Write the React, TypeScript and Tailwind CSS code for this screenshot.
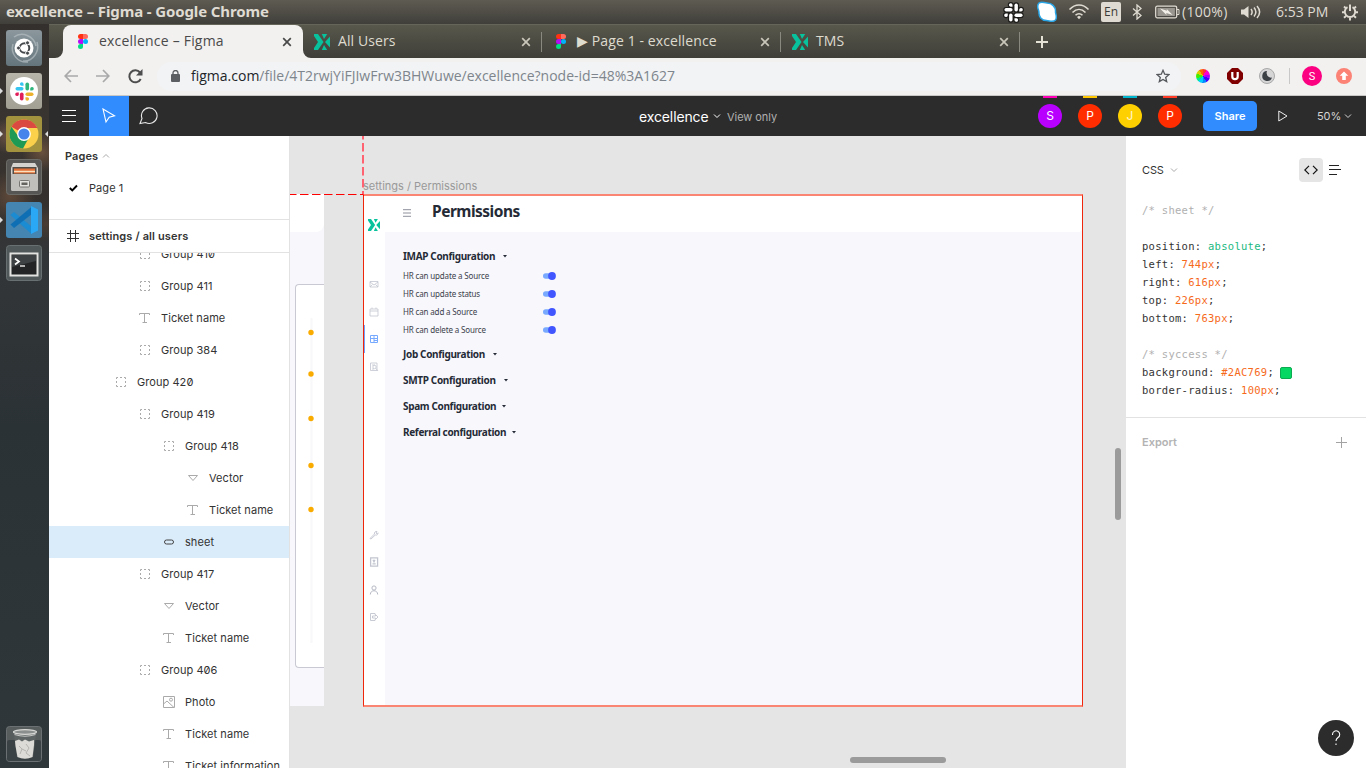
import React from "react";

const ui = "font-['Open_Sans','Noto_Sans',sans-serif]";

function FigmaLogo() {
  return (
    <svg width="10" height="15" viewBox="0 0 10 15" className="shrink-0">
      <path d="M5 0H2.500a2.500 2.500 0 0 0 0 5H5z" fill="#ff3211" />
      <path d="M5 0h2.500a2.500 2.500 0 0 1 0 5H5z" fill="#ff6a5e" />
      <path d="M5 5H2.500a2.500 2.500 0 0 0 0 5H5z" fill="#b50cf5" />
      <circle cx="7.500" cy="7.500" r="2.500" fill="#00b3fb" />
      <path d="M5 10H2.500A2.500 2.500 0 1 0 5 12.500z" fill="#00df81" />
    </svg>
  );
}

function XLogo({ size = 16 }: { size?: number }) {
  return (
    <svg width={size} height={size} viewBox="0 0 16 16" className="shrink-0" fill="#07c29c">
      <path d="M0 0h4l5.500 8L4 16H0v-2l4-6-4-6z" />
      <path d="M7.800 0h5.400L10 5z" />
      <path d="M7.800 16h5.400L10 11z" />
      <path d="M16 2.500v11L11 8z" />
    </svg>
  );
}

function Close({ color }: { color: string }) {
  return (
    <svg width="10" height="10" viewBox="0 0 10 10" className="shrink-0" stroke={color} strokeWidth="1.700">
      <path d="M1.200 1.200l7.600 7.600M8.800 1.200l-7.600 7.600" />
    </svg>
  );
}

function Chevron({ color, up = false }: { color: string; up?: boolean }) {
  return (
    <svg width="8" height="6" viewBox="0 0 8 6" fill="none" stroke={color} className="shrink-0">
      <path d={up ? "M1 4.500l3-3 3 3" : "M1 1.500l3 3 3-3"} />
    </svg>
  );
}

function SlackMark({ size, mono = false }: { size: number; mono?: boolean }) {
  const c = mono ? ["#fff", "#fff", "#fff", "#fff"] : ["#36c5f0", "#2eb67d", "#ecb22e", "#e01e5a"];
  return (
    <svg width={size} height={size} viewBox="0 0 20 20">
      {[0, 90, 180, 270].map((r, i) => (
        <g key={r} transform={`rotate(${r} 10 10)`} fill={c[(i + 1) % 4]}>
          <rect x="11" y="0.500" width="3.800" height="8.500" rx="1.900" />
          <path d="M16 9V6.900a1.900 1.900 0 1 1 1.900 2.100z" />
        </g>
      ))}
    </svg>
  );
}

function SystemBar() {
  return (
    <div className="flex h-6 items-center bg-gradient-to-b from-[#5e5b52] to-[#403f3a] text-[#dfdbd2]">
      <span className="-mt-0.5 ml-1.5 whitespace-nowrap font-['Noto_Sans',sans-serif] text-[15px] font-bold tracking-[-0.120px]">
        excellence – Figma - Google Chrome
      </span>
      <div className="ml-auto flex h-6 items-center">
        <div className="flex w-[33px] items-center">
          <svg width="21" height="21" viewBox="-1 -1 22 22">
            {[0, 90, 180, 270].map((r) => (
              <g key={r} transform={`rotate(${r} 10 10)`} fill="#fff" stroke="#1d1c1a" strokeWidth="2.400" paintOrder="stroke">
                <rect x="11" y="0.500" width="3.600" height="8.500" rx="1.800" />
                <path d="M16 9V6.900a1.900 1.900 0 1 1 1.900 2.100z" />
              </g>
            ))}
          </svg>
        </div>
        <svg width="22" height="22" viewBox="0 0 22 22" className="mr-[10px]">
          <path d="M3 2c3-2 5 0 8 0 5 0 9 4 8.500 9 0 2 2 5 0 8-3 3-6 .5-9 .5-5 0-8-4-7.500-8.500C2.500 8 0 5 3 2z" fill="#fff" stroke="#2aa5e6" strokeWidth="1.500" />
        </svg>
        <svg width="22" height="16" viewBox="0 0 22 16" fill="none" stroke="#dfdbd2" strokeWidth="1.600">
          <path d="M1.500 5.500C7-.5 15-.5 20.500 5.500M4.500 8.500c4-4 9-4 13 0M7.500 11.300c2-2 5-2 7 0" />
          <path d="M9 13l2-1.200 2 1.200-2 2.300z" fill="#dfdbd2" stroke="none" />
        </svg>
        <span className={`${ui} ml-[11px] flex h-5 w-5 items-center justify-center rounded-[2px] bg-[#dfdbd2] text-[12px] font-medium text-[#3c3b37]`}>
          En
        </span>
        <svg width="10" height="16" viewBox="0 0 10 16" className="ml-[11px]" fill="none" stroke="#dfdbd2" strokeWidth="1.300">
          <path d="M1 4.500l8 7-4 3.500V1l4 3.500-8 7" />
        </svg>
        <svg width="25" height="14" viewBox="0 0 25 14" className="ml-[13px]">
          <rect x="0.700" y="1.200" width="21" height="11.600" rx="1.500" fill="none" stroke="#dfdbd2" strokeWidth="1.300" />
          <rect x="2.500" y="3" width="17.400" height="8" fill="#99968f" />
          <path d="M22 4.500h2v5h-2" fill="none" stroke="#dfdbd2" />
          <path d="M5 3.500l7 2.200-.3-1.700 6 6-6.400-2 .2 2z" fill="#f2efe8" />
        </svg>
        <span className={`${ui} -mt-0.5 ml-[2px] w-[47px] whitespace-nowrap text-[14px] tracking-[0.300px]`}>(100%)</span>
        <svg width="20" height="16" viewBox="0 0 20 16" className="ml-[12px]" fill="none" stroke="#dfdbd2" strokeWidth="1.500">
          <path d="M0 5.500h3L7.500 2v12L3 10.500H0z" fill="#dfdbd2" stroke="none" />
          <path d="M10 5c1.500 2 1.500 4 0 6M13 3.500c2.500 3 2.500 6 0 9M16 2c3.500 4 3.500 8 0 12" />
        </svg>
        <span className={`${ui} -mt-0.5 ml-[15px] w-[53px] whitespace-nowrap text-[14px]`}>6:53 PM</span>
        <svg width="18" height="18" viewBox="0 0 18 18" className="mr-[7px] ml-[12px]" fill="none" stroke="#dfdbd2">
          <path d="M6.500 4.200a5.200 5.200 0 1 0 5 0" strokeWidth="1.900" />
          <path d="M9 1.500v6.500" strokeWidth="2" />
          <path d="M1 9.200h2.500M14.500 9.200H17M3 14.800l2-1.800M15 14.800L13 13M9 15v2.500M3 3.500l1.700 1.700M15 3.500l-1.700 1.700" strokeWidth="1.900" />
        </svg>
      </div>
    </div>
  );
}

function UbuntuIcon() {
  return (
    <svg width="36" height="36" viewBox="0 0 36 36">
      <defs>
        <linearGradient id="ub" x1="0" y1="0" x2="0" y2="1">
          <stop offset="0" stopColor="#8b979d" />
          <stop offset="1" stopColor="#65757c" />
        </linearGradient>
      </defs>
      <rect width="36" height="36" rx="3" fill="url(#ub)" />
      <path d="M8 7c8-6 20-1 22 9M31 12c3 9-4 20-14 19M22 32C12 33 4 24 7 14" fill="none" stroke="#b3bec2" strokeWidth="1.500" opacity=".7" />
      <circle cx="18" cy="18" r="9.500" fill="#fff" />
      <circle cx="18.500" cy="18" r="4.800" fill="none" stroke="#45484b" strokeWidth="2" />
      <g fill="#45484b" stroke="#fff" strokeWidth=".9">
        <circle cx="12.500" cy="18" r="2" />
        <circle cx="21.500" cy="12.800" r="2" />
        <circle cx="21.500" cy="23.200" r="2" />
      </g>
    </svg>
  );
}

function SlackIcon() {
  return (
    <div className="flex h-9 w-9 items-center justify-center rounded-[3px] bg-gradient-to-b from-[#b7b5aa] to-[#a29f93]">
      <div className="flex h-7 w-7 items-center justify-center rounded-full bg-white">
        <SlackMark size={19} />
      </div>
    </div>
  );
}

function ChromeIcon() {
  return (
    <svg width="36" height="36" viewBox="0 0 36 36">
      <rect width="36" height="36" rx="3" fill="#a3933f" />
      <circle cx="18" cy="18" r="14.500" fill="#fbd04a" />
      <path d="M18 18L5.400 10.800A14.500 14.500 0 0 1 30.600 10.800L31.500 12H18z" fill="#da4a41" />
      <path d="M5.400 10.800A14.500 14.500 0 0 0 17 32.500l6.200-11.500L18 18l-5.200 3z" fill="#1e9a55" />
      <circle cx="18" cy="18" r="6.900" fill="#fff" />
      <circle cx="18" cy="18" r="5.600" fill="#4683ea" />
    </svg>
  );
}

function FilesIcon() {
  return (
    <svg width="36" height="36" viewBox="0 0 36 36">
      <rect x="0.500" y="0.500" width="35" height="35" rx="3" fill="#565755" stroke="#6c6c69" />
      <path d="M7 4h22l3 5v21a2 2 0 0 1-2 2H7a2 2 0 0 1-2-2V9z" fill="#d4d3d0" />
      <rect x="6.500" y="8" width="24" height="7" fill="#504d49" />
      <path d="M8 9.500h21v5H8z" fill="#e17038" />
      <path d="M8 12.500h21" stroke="#f9dfbd" strokeWidth="1.500" />
      <path d="M5 15h27v15a2 2 0 0 1-2 2H7a2 2 0 0 1-2-2z" fill="#c0bfbb" />
      <rect x="13.500" y="21.500" width="10" height="6.500" rx="1" fill="#e3e2df" stroke="#777570" />
      <rect x="15.500" y="23.500" width="6" height="2.500" fill="#65635e" />
    </svg>
  );
}

function CodeIcon() {
  return (
    <svg width="36" height="36" viewBox="0 0 36 36">
      <rect width="36" height="36" rx="3" fill="#4485b1" />
      <path d="M4.500 13l3.500-3 18 15v7.500z" fill="#1b8bd2" />
      <path d="M4.500 22.500L8 26l18-14V4.500z" fill="#0f6fb4" />
      <path d="M25 4l7 3.500v21L25 32z" fill="#2ba8f5" />
    </svg>
  );
}

function TerminalIcon() {
  return (
    <svg width="36" height="36" viewBox="0 0 36 36">
      <rect x="0.500" y="0.500" width="35" height="35" rx="3" fill="#50585a" stroke="#697071" />
      <rect x="3.500" y="7.500" width="29" height="24" fill="#e2e2e0" />
      <rect x="5.500" y="9.500" width="25" height="20" fill="#222426" />
      <path d="M6 10h24v6L6 22z" fill="#3e4143" />
      <path d="M9 13.500l4 3-4 3" fill="none" stroke="#fff" strokeWidth="1.700" />
      <path d="M14 21h5" stroke="#fff" strokeWidth="1.300" />
    </svg>
  );
}

function TrashIcon() {
  return (
    <svg width="36" height="36" viewBox="0 0 36 36">
      <rect x="0.500" y="0.500" width="35" height="35" rx="3" fill="#575c5d" stroke="#6b7072" />
      <rect x="1" y="14" width="34" height="21" rx="2" fill="#3b4245" />
      <path d="M8 9h22l-2 14-1 8q-8 3-16 0l-1-8z" fill="#5f6564" />
      <path d="M9 15l4-1.500 3 2 3-2 4 2 5-1.500v5l-1.500 12q-7.500 3.500-15 0L9.500 20z" fill="#dcdbd7" />
      <path d="M13 20l3 3-2 5M20 18l3 4-3 5 4 3M16 23l4 2" stroke="#b5b4b0" fill="none" />
      <ellipse cx="19" cy="6" rx="11.500" ry="2.300" fill="#8b8f8d" stroke="#d8d9d6" strokeWidth="1.200" />
      <path d="M8.500 8.500q10.500 3.500 21 0" fill="none" stroke="#c4c6c3" strokeWidth="1.200" />
    </svg>
  );
}

function Launcher() {
  const items = [
    { el: <UbuntuIcon />, run: false },
    { el: <SlackIcon />, run: true },
    { el: <ChromeIcon />, run: true },
    { el: <FilesIcon />, run: false },
    { el: <CodeIcon />, run: true },
    { el: <TerminalIcon />, run: false },
  ];
  return (
    <div className="flex w-[49px] shrink-0 flex-col bg-[radial-gradient(circle_at_8px_112px,#6a5142_0,transparent_18px),radial-gradient(circle_at_42px_128px,#69503c_0,transparent_20px),radial-gradient(circle_at_10px_172px,#5d4839_0,transparent_26px),radial-gradient(circle_at_46px_200px,#493c33_0,transparent_18px),linear-gradient(#33302d_0,#3a3531_110px,#34302d_170px,#333638_230px,#2b3235_400px,#30373a_744px)] pt-1.5">
      {items.map((it, i) => (
        <div key={i} className="mb-[7px] flex h-9 items-center">
          <div className="flex w-1.5">
            {it.run && (
              <svg width="3" height="6" viewBox="0 0 3 6">
                <path d="M0 0l3 3-3 3z" fill="#ddd" />
              </svg>
            )}
          </div>
          {it.el}
          {i === 2 && (
            <svg width="3" height="6" viewBox="0 0 3 6" className="ml-[3px]">
              <path d="M3 0L0 3l3 3z" fill="#ddd" />
            </svg>
          )}
        </div>
      ))}
      <div className="mt-auto mb-1.5 ml-1.5 h-9">
        <TrashIcon />
      </div>
    </div>
  );
}

function Tab({ icon, iconCls, label, cls }: { icon: React.ReactNode; iconCls: string; label: string; cls: string }) {
  return (
    <div className={`flex h-[33px] items-center ${cls}`}>
      <div className={`flex ${iconCls}`}>{icon}</div>
      <span className={`${ui} -mt-0.5 whitespace-nowrap text-[14px] tracking-[0.100px] text-[#dedbcf]`}>{label}</span>
      <div className="ml-auto flex items-center">
        <Close color="#c9c6ba" />
        <div className="ml-[10px] h-5 w-px bg-[#8a897f]" />
      </div>
    </div>
  );
}

function TabStrip() {
  return (
    <div className="flex h-[34px] items-center border-t border-[#66655a] bg-gradient-to-b from-[#59584c] to-[#3f3e39]">
      <div className="flex h-[33px] w-[14px] items-end justify-end">
        <svg width="8" height="8" viewBox="0 0 8 8">
          <path d="M8 0v8H0a8 8 0 0 0 8-8z" fill="#f2f1f0" />
        </svg>
      </div>
      <div className="flex h-[33px] w-[240px] items-center rounded-t-lg bg-[#f2f1f0] pl-[15px]">
        <FigmaLogo />
        <span className={`${ui} -mt-0.5 ml-[11px] whitespace-nowrap text-[14px] tracking-[0.200px] text-[#4a4a4a]`}>excellence – Figma</span>
        <div className="mr-[11px] ml-auto flex">
          <Close color="#4a4a4a" />
        </div>
      </div>
      <div className="flex h-[33px] w-[11px] items-end">
        <svg width="8" height="8" viewBox="0 0 8 8">
          <path d="M0 0v8h8a8 8 0 0 1-8-8z" fill="#f2f1f0" />
        </svg>
      </div>
      <Tab icon={<XLogo />} iconCls="w-6" label="All Users" cls="w-[228px]" />
      <Tab icon={<FigmaLogo />} iconCls="w-[21px]" label="▶ Page 1 - excellence" cls="ml-[14px] w-[225px]" />
      <Tab icon={<XLogo />} iconCls="w-6" label="TMS" cls="ml-[11px] w-[228px]" />
      <svg width="12" height="12" viewBox="0 0 12 12" className="ml-4" stroke="#e4e1d5" strokeWidth="2">
        <path d="M6 0v12M0 6h12" />
      </svg>
    </div>
  );
}

function AddressBar() {
  return (
    <div className="flex h-[38px] items-center border-b border-[#c9c8c7] bg-[#f2f1f0] pb-px">
      <svg width="14" height="14" viewBox="0 0 14 14" className="ml-[15px]" fill="none" stroke="#a9a9a9" strokeWidth="1.700">
        <path d="M14 7H1.500M7 1L1.200 7 7 13" />
      </svg>
      <svg width="14" height="14" viewBox="0 0 14 14" className="ml-[18px]" fill="none" stroke="#a9a9a9" strokeWidth="1.700">
        <path d="M0 7h12.500M7 1l5.800 6L7 13" />
      </svg>
      <svg width="15" height="15" viewBox="0 0 15 15" className="ml-[18px]" fill="none" stroke="#4d4d4d" strokeWidth="2">
        <path d="M12.700 10A6 6 0 1 1 12 3.500" />
        <path d="M14.500 0v6.500H8z" fill="#4d4d4d" stroke="none" />
      </svg>
      <div className="ml-[14px] flex h-[29px] w-[1024px] items-center rounded-full bg-[#f1f3f5] pl-[14px]">
        <svg width="9" height="12" viewBox="0 0 9 12">
          <rect x="0" y="4" width="9" height="8" rx="1" fill="#5b5e63" />
          <path d="M2 5V3a2.500 2.500 0 0 1 5 0v2" fill="none" stroke="#5b5e63" strokeWidth="1.300" />
        </svg>
        <span className={`${ui} -mt-px ml-[11px] whitespace-nowrap text-[14px] text-[#7e858c]`}>
          <span className="text-[#222528]">figma.com</span>/file/4T2rwjYiFJIwFrw3BHWuwe/excellence?node-id=48%3A1627
        </span>
        <svg width="14" height="14" viewBox="0 0 14 14" className="mr-[11px] ml-auto" fill="none" stroke="#55585c" strokeWidth="1.300">
          <path d="M7 1.300l1.700 3.900 4.200.4-3.200 2.800 1 4.200L7 10.400l-3.700 2.200 1-4.200L1.100 5.600l4.200-.4z" />
        </svg>
      </div>
      <div className="ml-[15px] h-[14px] w-[14px] rounded-full bg-[conic-gradient(#f33_0_30deg,#f0c_30deg_75deg,#a0f_75deg_110deg,#40f_110deg_150deg,#08f_150deg_185deg,#0cf_185deg_220deg,#0e8_220deg_250deg,#4e0_250deg_290deg,#dc0_290deg_325deg,#f60_325deg)]" />
      <svg width="16" height="16" viewBox="0 0 16 16" className="ml-[17px]">
        <path d="M5 0h6l5 5v6l-5 5H5l-5-5V5z" fill="#800000" />
        <path d="M5.300 4v4.500a2.700 2.700 0 0 0 5.400 0V4" fill="none" stroke="#fff" strokeWidth="2.200" />
      </svg>
      <svg width="16" height="16" viewBox="0 0 16 16" className="ml-4">
        <circle cx="8" cy="8" r="7.500" fill="#d6d6d6" stroke="#a8a8a8" />
        <path d="M8 3a5 5 0 1 0 5 6.500A4.500 4.500 0 0 1 8 3z" fill="#3b4045" />
      </svg>
      <div className="ml-[14px] h-4 w-px bg-[#c8c8c8]" />
      <div className="ml-3 flex h-5 w-5 items-center justify-center rounded-full bg-[#fb0081] pt-px font-['Roboto',sans-serif] text-[11px] leading-none text-white">S</div>
      <svg width="16" height="16" viewBox="0 0 16 16" className="ml-[14px]">
        <circle cx="8" cy="8" r="8" fill="#fb8275" />
        <path d="M8 3.500l4.300 4.300H9.800V12H6.200V7.800H3.700z" fill="#fff" />
      </svg>
    </div>
  );
}

function FigmaToolbar() {
  const people = [
    { l: "S", cls: "bg-[#b800ff]", bar: "bg-[#ff00b8]", t: "text-white" },
    { l: "P", cls: "bg-[#ff2d00]", bar: "bg-[#ffc700]", t: "text-white" },
    { l: "J", cls: "bg-[#ffd000]", bar: "bg-[#00b5ce]", t: "text-white/80" },
    { l: "P", cls: "bg-[#ff2d00]", bar: "bg-[#ff3b25]", t: "text-white" },
  ];
  return (
    <div className="flex h-10 items-center bg-[#2c2c2c] font-['Inter',sans-serif] text-white">
      <div className="flex w-10 justify-center">
        <svg width="14" height="12" viewBox="0 0 14 12" stroke="#fff">
          <path d="M0 .5h14M0 5.500h14M0 11.500h14" strokeWidth="1" />
        </svg>
      </div>
      <div className="flex h-10 w-10 items-center justify-center bg-[#318dfe]">
        <svg width="14" height="16" viewBox="0 0 14 16" fill="none" stroke="#fff" strokeWidth="1.100">
          <path d="M1 1l11.500 6.800-5.300 1.400L4 14z" />
        </svg>
      </div>
      <div className="flex w-10 justify-center pr-0.5">
        <svg width="19" height="18" viewBox="0 0 19 18" fill="none" stroke="#e8e8e8" strokeWidth="1.100">
          <path d="M1 16.500l2-5A7.800 7.800 0 1 1 6.500 15.500z" />
        </svg>
      </div>
      <span className="ml-[470px] w-[70px] text-[14px] tracking-[-0.120px]">excellence</span>
      <span className="ml-[4px] flex w-[14px]">
        <Chevron color="#fff" />
      </span>
      <span className="mt-0.5 w-[50px] text-[11px] whitespace-nowrap text-[#b0b0b0] tracking-[-0.050px]">View only</span>
      <div className="ml-auto flex gap-4">
        {people.map((p, i) => (
          <div key={i} className="flex h-10 w-6 flex-col items-center">
            <div className={`h-0.5 w-[14px] ${p.bar}`} />
            <div className={`mt-1.5 flex h-6 w-6 items-center justify-center rounded-full text-[12px] leading-none ${p.cls} ${p.t}`}>{p.l}</div>
          </div>
        ))}
      </div>
      <div className="ml-[21px] flex h-[30px] w-[54px] items-center justify-center rounded-[5px] bg-[#318dfe] text-[11px] font-semibold">Share</div>
      <svg width="10" height="12" viewBox="0 0 10 12" className="ml-[21px]" fill="none" stroke="#eee">
        <path d="M0.800 1l8.200 5-8.200 5z" />
      </svg>
      <span className="ml-[29px] w-[27px] text-[11px] tracking-[-0.100px] text-[#d5d5d5]">50%</span>
      <span className="mr-[14px] flex">
        <Chevron color="#d5d5d5" />
      </span>
    </div>
  );
}

type Kind = "group" | "text" | "vector" | "sheet" | "photo";

function LayerIcon({ kind }: { kind: Kind }) {
  return (
    <svg width="16" height="16" viewBox="0 0 16 16" fill="none" stroke="#aaa" className="shrink-0">
      {kind === "group" && <path d="M3.500 5V3.500H5M7 3.500h2M11 3.500h1.500V5M12.500 7v2M12.500 11v1.500H11M9 12.500H7M5 12.500H3.500V11M3.500 9V7" />}
      {kind === "text" && <path d="M2.500 5V3.500h10V5M7.500 3.500v9M5.500 12.500h4.500" />}
      {kind === "vector" && <path d="M3.500 5.500h9L8 10.500z" />}
      {kind === "sheet" && <rect x="3.500" y="6" width="9" height="4" rx="2" stroke="#444" />}
      {kind === "photo" && (
        <>
          <path d="M2.500 2.500h11v11h-11z" />
          <circle cx="10" cy="5.700" r="1.500" />
          <path d="M2.500 10l3.500-3 7 6.500" />
        </>
      )}
    </svg>
  );
}

const layers: [Kind, string, string][] = [
  ["group", "Group 410", "pl-[88px]"],
  ["group", "Group 411", "pl-[88px]"],
  ["text", "Ticket name", "pl-[88px]"],
  ["group", "Group 384", "pl-[88px]"],
  ["group", "Group 420", "pl-[64px]"],
  ["group", "Group 419", "pl-[88px]"],
  ["group", "Group 418", "pl-[112px]"],
  ["vector", "Vector", "pl-[136px]"],
  ["text", "Ticket name", "pl-[136px]"],
  ["sheet", "sheet", "pl-[112px] bg-[#daebf9]"],
  ["group", "Group 417", "pl-[88px]"],
  ["vector", "Vector", "pl-[112px]"],
  ["text", "Ticket name", "pl-[112px]"],
  ["group", "Group 406", "pl-[88px]"],
  ["photo", "Photo", "pl-[112px]"],
  ["text", "Ticket name", "pl-[112px]"],
  ["text", "Ticket information", "pl-[112px]"],
];

function LayersPanel() {
  return (
    <div className="flex w-[241px] shrink-0 flex-col overflow-hidden border-r border-[#e2e2e2] bg-white font-['Inter',sans-serif] text-[11px] tracking-[0.060px] text-[#333] slashed-zero">
      <div className="h-[84px] shrink-0 border-b border-[#e2e2e2] pt-1">
        <div className="flex h-8 items-center gap-1 pl-4">
          <span className="font-semibold">Pages</span>
          <Chevron color="#aaa" up />
        </div>
        <div className="flex h-8 items-center pl-4">
          <div className="flex w-6 pl-1">
            <svg width="9" height="8" viewBox="0 0 9 8" fill="none" stroke="#000" strokeWidth="1.900">
              <path d="M0.800 4l2.500 2.500L8 1.500" />
            </svg>
          </div>
          Page 1
        </div>
      </div>
      <div className="flex h-[33px] shrink-0 items-center border-b border-[#e2e2e2] pl-4">
        <div className="flex w-6 pl-0.5">
          <svg width="12" height="12" viewBox="0 0 12 12" stroke="#333">
            <path d="M3.500 0v12M8.500 0v12M0 3.500h12M0 8.500h12" />
          </svg>
        </div>
        <span className="font-semibold tracking-[0.130px]">settings / all users</span>
      </div>
      <div className="min-h-0 flex-1 overflow-hidden">
        <div className="-mt-[15px]">
          {layers.map(([k, name, pad], i) => (
            <div key={i} className={`flex h-8 items-center gap-2 whitespace-nowrap ${pad}`}>
              <LayerIcon kind={k} />
              {name}
            </div>
          ))}
        </div>
      </div>
    </div>
  );
}

function SideNav() {
  return (
    <div className="relative flex w-[21px] shrink-0 flex-col bg-white">
      <div className="absolute top-[129px] left-0 h-7 w-px bg-[#6ea3ff]" />
      <div className="mt-[23px] flex h-3 pl-1">
        <XLogo size={12} />
      </div>
      <div className="mt-[47px] flex flex-col gap-[15.500px] pl-[5px] text-[#c2c5cf]">
        <svg width="10" height="12" viewBox="0 0 10 12" className="block" fill="none" stroke="currentColor" strokeWidth=".8">
          <path d="M1 3.500h8v5.500H1zM1 4l4 3 4-3M1 9l2.500-2.500M9 9L6.500 6.500" />
        </svg>
        <svg width="10" height="12" viewBox="0 0 10 12" className="block" fill="none" stroke="currentColor" strokeWidth=".8">
          <path d="M1 3h8v7H1zM1 5h8M3 1.500V3M7 1.500V3" />
        </svg>
        <svg width="10" height="12" viewBox="0 0 10 12" className="block" fill="none" stroke="#77aaff" strokeWidth="1">
          <path d="M1.500 2.500h7v7h-7zM5 2v8M1.500 5.500h7M5 7.500h3.500" />
        </svg>
        <svg width="10" height="12" viewBox="0 0 10 12" className="block" fill="none" stroke="currentColor" strokeWidth=".8">
          <path d="M1.500 2h6.500v7.500H1.500zM3 4h3M3 8h2" />
          <circle cx="5.500" cy="6" r="1.700" />
          <path d="M6.800 7.300L9 10" />
        </svg>
      </div>
      <div className="mt-[156px] flex flex-col gap-[15.500px] pl-[5px] text-[#c2c5cf]">
        <svg width="10" height="12" viewBox="0 0 10 12" className="block" fill="none" stroke="currentColor" strokeWidth=".9">
          <path d="M1 9.500l4.500-4.500A2 2 0 0 1 8 2.500L7 4l1 .8 1-1A2 2 0 0 1 6.300 6L2 10z" />
        </svg>
        <svg width="10" height="12" viewBox="0 0 10 12" className="block" fill="none" stroke="currentColor" strokeWidth="1.300">
          <path d="M1.600 1.800h7v8.400h-7zM3.500 7.800h3.200M4 3.800l1 2 1-2" />
        </svg>
        <svg width="10" height="12" viewBox="0 0 10 12" className="block" fill="none" stroke="#b5b9c4" strokeWidth="1">
          <circle cx="5" cy="4" r="2.100" />
          <path d="M1.300 10.500c0-5 7.400-5 7.400 0" />
        </svg>
        <svg width="10" height="12" viewBox="0 0 10 12" className="block" fill="none" stroke="currentColor" strokeWidth=".9">
          <path d="M6 3.500V2.500H1.500v7H6v-1M3.500 5v2h3v1.500L9 6 6.500 3.500V5z" />
        </svg>
      </div>
    </div>
  );
}

function Heading({ text, w }: { text: string; w: string }) {
  return (
    <div className={`flex h-[26px] items-center ${w}`}>
      <span className="whitespace-nowrap text-[10px] font-bold tracking-[-0.340px] text-[#252b36]">{text}</span>
      <svg width="4" height="3" viewBox="0 0 4 3" className="ml-auto">
        <path d="M0 0h4L2 2.600z" fill="#252b36" />
      </svg>
    </div>
  );
}

function PermissionsFrame() {
  return (
    <div className="absolute top-[58px] left-[73px] flex h-[513px] w-[720px] border-x border-y-2 border-x-[#f0260c] border-y-[#fa8573] bg-[#f7f7fc] font-['Noto_Sans',sans-serif]">
      <SideNav />
      <div className="flex flex-1 flex-col">
        <div className="flex h-9 items-center rounded-br-[4px] bg-white pb-0.5 pl-[18px]">
          <svg width="8" height="8" viewBox="0 0 8 8" stroke="#8e919c">
            <path d="M0 .7h8M0 4h8M0 7.300h8" />
          </svg>
          <span className="mt-[-2px] ml-[21px] text-[15.500px] font-bold tracking-[-0.500px] text-[#252b36]">Permissions</span>
        </div>
        <div className="flex flex-col pt-[11px] pl-[18px]">
          <Heading text="IMAP Configuration" w="w-[104px]" />
          <div className="mt-[-2px] mb-[2px] flex flex-col">
            {["HR can update a Source", "HR can update status", "HR can add a Source", "HR can delete a Source"].map((t) => (
              <div key={t} className="flex h-[18px] w-[153px] items-center justify-between text-[8px] tracking-[-0.150px] text-[#3c414b]">
                <span className="-mt-px whitespace-nowrap">{t}</span>
                <svg width="13" height="8" viewBox="0 0 13 8">
                  <rect x="0" y="1.300" width="10" height="5.400" rx="2.700" fill="#78a9ff" />
                  <circle cx="9" cy="4" r="3.900" fill="#4256ff" />
                </svg>
              </div>
            ))}
          </div>
          <Heading text="Job Configuration" w="w-[94px]" />
          <Heading text="SMTP Configuration" w="w-[105px]" />
          <Heading text="Spam Configuration" w="w-[103px]" />
          <Heading text="Referral configuration" w="w-[113px]" />
        </div>
      </div>
    </div>
  );
}

function NeighbourFrame() {
  return (
    <div className="absolute top-[58px] left-0 h-[512px] w-[34px] overflow-hidden bg-[#f7f7fc]">
      <div className="h-[38px] rounded-br-lg bg-white" />
      <div className="mt-[52px] ml-[5px] h-[384px] rounded-l border border-r-0 border-[#c9c9d3] bg-white">
        <svg width="28" height="382" viewBox="0 0 28 382">
          <path d="M15.500 33v325" stroke="#f8f8fa" strokeWidth="2" />
          {[47.500, 89, 133.500, 180.500, 224.500].map((y) => (
            <circle key={y} cx="15" cy={y} r="2.700" fill="#f9ab00" />
          ))}
        </svg>
      </div>
    </div>
  );
}

function Canvas() {
  return (
    <div className="relative flex-1 overflow-hidden bg-[#e5e5e5]">
      <NeighbourFrame />
      <span className="absolute top-[43px] left-[73px] font-['Inter',sans-serif] text-[11px] leading-[14px] whitespace-nowrap text-[#999]">
        settings / Permissions
      </span>
      <PermissionsFrame />
      <svg width="75" height="60" viewBox="0 0 75 60" className="absolute top-0 left-0">
        <path d="M73 -5V58" stroke="#ff6270" strokeWidth="2" strokeDasharray="8.500 3.500" />
        <path d="M-2 58.500H73" stroke="#f00" strokeWidth="1" strokeDasharray="8.500 3.500" />
        <path d="M73.500 58.500V60" stroke="#f00" />
      </svg>
      <div className="absolute top-[312px] left-[825px] h-[72px] w-1.5 rounded-full bg-[#9b9b9b]" />
      <div className="absolute top-[621px] left-[560px] h-1.5 w-24 rounded-full bg-[#9b9b9b]" />
    </div>
  );
}

function CodePanel() {
  const props: [string, string][] = [
    ["left", "744px"],
    ["right", "616px"],
    ["top", "226px"],
    ["bottom", "763px"],
  ];
  return (
    <div className="flex w-[240px] shrink-0 flex-col bg-white font-['Inter',sans-serif] text-[11px] text-[#333]">
      <div className="mt-[22px] flex h-6 items-center pl-4">
        <span className="mr-1.5 tracking-[-0.150px]">CSS</span>
        <Chevron color="#aaa" />
        <div className="ml-auto flex h-6 w-6 items-center justify-center rounded-sm bg-[#e5e5e5]">
          <svg width="14" height="10" viewBox="0 0 14 10" fill="none" stroke="#111" strokeWidth="1.200">
            <path d="M5 .8L.8 5 5 9.200M9 .8L13.200 5 9 9.200" />
          </svg>
        </div>
        <svg width="12" height="10" viewBox="0 0 12 10" className="mr-[25px] ml-1.5" stroke="#222">
          <path d="M0 .5h10M0 4.500h12M0 9.500h8" />
        </svg>
      </div>
      <div className="mt-[19px] h-[217px] border-b border-[#e2e2e2] pl-4 font-['DejaVu_Sans_Mono',monospace] text-[10.500px] leading-[18px] tracking-[0.280px] whitespace-pre">
        <div className="text-[#b0b0b0]">/* sheet */</div>
        <div className="mt-[18px]">
          position: <span className="text-[#1bb980]">absolute</span>;
        </div>
        {props.map(([k, v]) => (
          <div key={k}>
            {k}: <span className="text-[#f66a1c]">{v}</span>;
          </div>
        ))}
        <div className="mt-[18px] text-[#b0b0b0]">/* syccess */</div>
        <div className="flex items-center">
          background: <span className="text-[#f66a1c]">#2AC769</span>;
          <span className="mt-px ml-1.5 h-3 w-3 rounded-[2px] border border-[#0cab52] bg-[#05d963]" />
        </div>
        <div>
          border-radius: <span className="text-[#f66a1c]">100px</span>;
        </div>
      </div>
      <div className="flex h-12 items-center justify-between pr-[19px] pl-4">
        <span className="font-semibold text-[#b3b3b3]">Export</span>
        <svg width="11" height="11" viewBox="0 0 11 11" stroke="#a3a3a3">
          <path d="M5.500 0v11M0 5.500h11" />
        </svg>
      </div>
      <div className="mt-auto mr-3 mb-3 ml-auto flex h-9 w-9 items-center justify-center rounded-full bg-[#2c2c2c]">
        <svg width="10" height="16" viewBox="0 0 10 16" fill="none" stroke="#fff" strokeWidth="1.100">
          <path d="M1.500 5V4.500a3.600 3.600 0 1 1 5.500 3c-1.400 1-2 1.500-2 3.500M5 13.500V15" />
        </svg>
      </div>
    </div>
  );
}

export default function App() {
  return (
    <div className="flex h-[768px] w-[1366px] flex-col overflow-hidden">
      <SystemBar />
      <div className="flex min-h-0 flex-1">
        <Launcher />
        <div className="flex min-w-0 flex-1 flex-col">
          <TabStrip />
          <AddressBar />
          <FigmaToolbar />
          <div className="flex min-h-0 flex-1">
            <LayersPanel />
            <Canvas />
            <CodePanel />
          </div>
        </div>
      </div>
    </div>
  );
}
